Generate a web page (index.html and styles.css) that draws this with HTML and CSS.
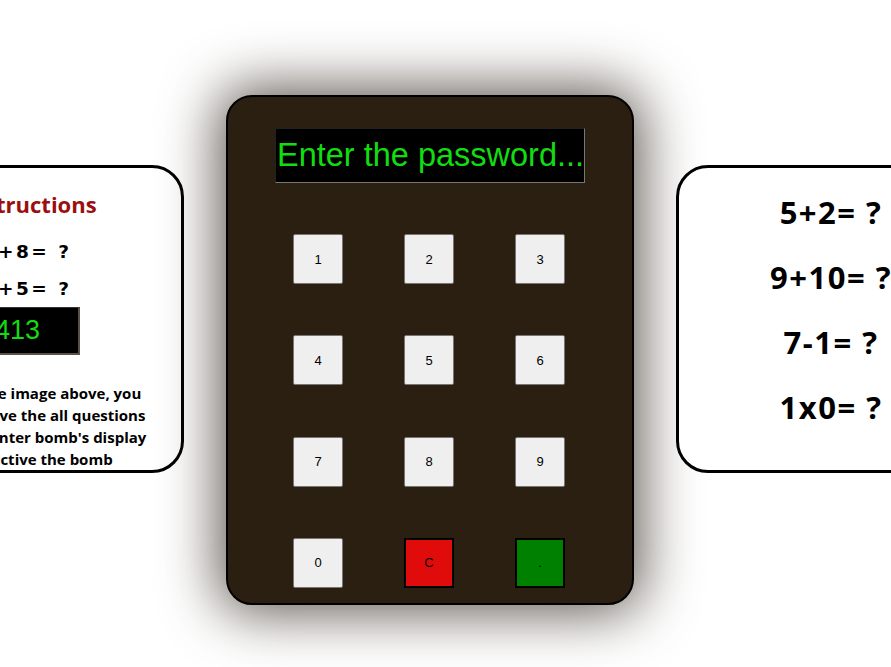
FILE: index.html
```html
<!DOCTYPE html>
<html>
<head>
<meta charset="utf-8">
<link rel="stylesheet" href="styles.css">
</head>
<body>
<div class="stage">
  <div class="card card-left">
    <h2 class="title">Instructions</h2>
    <p class="eq-small">7+8= ?</p>
    <p class="eq-small">8+5= ?</p>
    <div class="mini-display">15413</div>
    <p class="note">In the image above, you<br>to solve the all questions<br>and enter bomb's display<br>active the bomb</p>
  </div>
  <div class="bomb">
    <div class="display">Enter the password...</div>
    <div class="keypad">
      <button class="key">1</button>
      <button class="key">2</button>
      <button class="key">3</button>
      <button class="key">4</button>
      <button class="key">5</button>
      <button class="key">6</button>
      <button class="key">7</button>
      <button class="key">8</button>
      <button class="key">9</button>
      <button class="key">0</button>
      <button class="key key-clear">C</button>
      <button class="key key-enter">.</button>
    </div>
  </div>
  <div class="card card-right">
    <p class="eq">5+2= ?</p>
    <p class="eq">9+10= ?</p>
    <p class="eq">7-1= ?</p>
    <p class="eq">1x0= ?</p>
  </div>
</div>
</body>
</html>
```
FILE: styles.css
```css
html, body {
  margin: 0;
  padding: 0;
  background: #ffffff;
  overflow: hidden;
}
body {
  width: 891px;
  height: 667px;
}
.stage {
  display: flex;
  align-items: flex-start;
  gap: 42px;
  width: 1108px;
  margin-left: -124px;
  padding-top: 95px;
}
.card {
  flex: 0 0 auto;
  margin-top: 70px;
  border: 3px solid #000;
  border-radius: 32px;
  background: #fff;
  font-family: "Open Sans", "Noto Sans", sans-serif;
  font-weight: 700;
  color: #000;
  text-align: center;
}
.card p { margin: 0; }
.card-left {
  display: flex;
  flex-direction: column;
  align-items: center;
  padding-left: 20px;
  box-sizing: border-box;
  width: 308px;
  height: 308px;
}
.title {
  margin: 21px 0 0;
  font-size: 22px;
  line-height: 30px;
  color: #9b0f0f;
  font-weight: 700;
  padding-right: 20px;
}
.eq-small {
  font-family: "DejaVu Sans", Verdana, sans-serif;
  font-size: 18.5px;
  line-height: 24px;
  letter-spacing: 2.5px;
  padding-right: 26px;
}
.card-left .title + .eq-small { margin-top: 21px; }
.card-left .eq-small + .eq-small { margin-top: 13px; }
.mini-display {
  margin-top: 6px;
  margin-right: 40px;
  width: 120px;
  height: 48px;
  box-sizing: border-box;
  background: #000;
  border: 1px solid #3a332c;
  border-bottom: 2px solid #5a524a;
  border-right: 2px solid #5a524a;
  color: #11dd11;
  font-family: "Liberation Sans", Arial, sans-serif;
  font-weight: 400;
  font-size: 27px;
  line-height: 45px;
  text-align: left;
  padding-left: 4px;
}
.note {
  margin-top: 27px !important;
  padding-left: 24px;
  font-size: 15px;
  line-height: 22px;
}
.card-right {
  display: flex;
  flex-direction: column;
  align-items: center;
  padding-top: 12px;
  box-sizing: border-box;
  width: 308px;
  height: 308px;
}
.eq {
  font-size: 31px;
  line-height: 65px;
  letter-spacing: 1.5px;
  padding-left: 2px;
}
.bomb {
  flex: 0 0 auto;
  width: 408px;
  height: 510px;
  box-sizing: border-box;
  background: #2b1f12;
  border: 2px solid #000;
  border-radius: 26px;
  box-shadow: 0 0 55px 8px rgba(45, 35, 25, 0.75);
  display: flex;
  flex-direction: column;
  align-items: center;
  padding-top: 31px;
}
.display {
  width: 310px;
  height: 55px;
  box-sizing: border-box;
  background: #000;
  border: 1px solid #777;
  border-top-color: #222;
  border-left-color: #222;
  color: #11dd11;
  font-family: "Liberation Sans", Arial, sans-serif;
  font-size: 32.5px;
  line-height: 52px;
  white-space: nowrap;
  padding-left: 1px;
}
.keypad {
  margin-top: 51px;
  display: grid;
  grid-template-columns: repeat(3, 50px);
  grid-auto-rows: 50px;
  column-gap: 61px;
  row-gap: 51.3px;
  margin-left: -2px;
}
.key {
  width: 50px;
  height: 50px;
  margin: 0;
  padding: 0;
  box-sizing: border-box;
  background: #efefef;
  border: 1px solid #767676;
  border-radius: 2px;
  font-family: "Liberation Sans", Arial, sans-serif;
  font-size: 13px;
  color: #000;
}
.key-clear {
  background: #e00c0c;
  border: 2px solid #000;
  border-radius: 0;
}
.key-enter {
  background: #008000;
  border: 2px solid #000;
  border-radius: 0;
}
```
